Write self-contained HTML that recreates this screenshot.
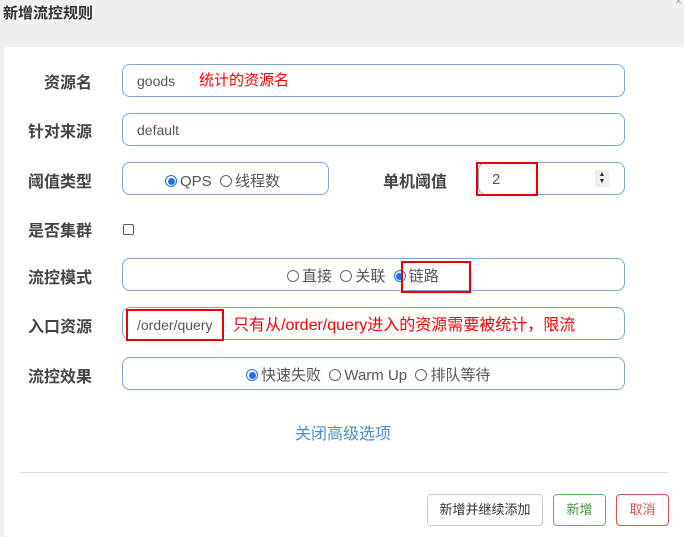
<!DOCTYPE html>
<html><head><meta charset="utf-8"><style>
*{box-sizing:border-box;margin:0;padding:0}
body{width:684px;height:527px;overflow:hidden;background:#f0f0f0;font-family:"Liberation Sans","Noto Sans CJK SC",sans-serif;position:relative;color:#333}
.a{position:absolute;line-height:1.2}
.title{left:3px;top:5px;font-size:15px;font-weight:bold;color:#333}
.panel{left:4px;top:47px;width:690px;height:490px;background:#fff;border-radius:4px}
.lbl{font-size:16px;font-weight:bold;color:#444;width:92px;text-align:right;left:0}
.box{border:1px solid #7fa6d0;border-radius:8px;height:33px;background:#fff}
.t{font-size:14px;color:#555}
.r{font-size:15px;color:#555}
.red{color:#f00;font-size:16px}
.rad{display:inline-block;width:12px;height:12px;border:1px solid #666;border-radius:50%;vertical-align:-1px;margin-right:3px;background:#fff;position:relative}
.rad.on{border-color:#1a73e8}
.rad.on::after{content:"";position:absolute;left:1.5px;top:1.5px;width:7px;height:7px;border-radius:50%;background:#1a73e8}
.hl{border:2px solid #e00}
.btn{height:32px;border:1px solid #ccc;border-radius:4px;font-size:13px;text-align:center;line-height:30px;background:#fff}
</style></head><body>
<div class="a title">新增流控规则</div>
<div class="a" style="right:2px;top:-6px;color:#aaa;font-size:12px">×</div>
<div class="a panel"></div>

<div class="a lbl" style="top:74px">资源名</div>
<div class="a box" style="left:122px;top:64px;width:503px"></div>
<div class="a t" style="left:137px;top:73px">goods</div>
<div class="a red" style="left:199px;top:72px;font-size:15px">统计的资源名</div>

<div class="a lbl" style="top:123px">针对来源</div>
<div class="a box" style="left:122px;top:113px;width:503px"></div>
<div class="a t" style="left:137px;top:122px">default</div>

<div class="a lbl" style="top:173px">阈值类型</div>
<div class="a box" style="left:122px;top:162px;width:207px"></div>
<div class="a r" style="left:165px;top:173px"><span class="rad on"></span>QPS&nbsp; <span class="rad"></span>线程数</div>
<div class="a lbl" style="top:173px;left:355px;width:92px">单机阈值</div>
<div class="a box" style="left:478px;top:162px;width:147px"></div>
<div class="a hl" style="left:476px;top:162px;width:62px;height:34px"></div>
<div class="a t" style="left:492px;top:171px;font-size:15px">2</div>
<div class="a" style="left:595px;top:170px;width:14px;height:17px;background:#eee;font-size:7px;line-height:7px;text-align:center;color:#333;padding-top:1px">▲<br>▼</div>

<div class="a lbl" style="top:222px">是否集群</div>
<div class="a" style="left:123px;top:224px;width:11px;height:11px;border:1px solid #555;border-radius:2px"></div>

<div class="a lbl" style="top:269px">流控模式</div>
<div class="a box" style="left:122px;top:258px;width:503px"></div>
<div class="a r" style="left:287px;top:268px"><span class="rad"></span>直接&nbsp; <span class="rad"></span>关联&nbsp; <span class="rad on"></span>链路</div>
<div class="a hl" style="left:401px;top:261px;width:70px;height:32px"></div>

<div class="a lbl" style="top:318px">入口资源</div>
<div class="a box" style="left:122px;top:307px;width:503px"></div>
<div class="a hl" style="left:126px;top:309px;width:98px;height:32px"></div>
<div class="a t" style="left:137px;top:317px">/order/query</div>
<div class="a red" style="left:233px;top:316px">只有从/order/query进入的资源需要被统计，限流</div>

<div class="a lbl" style="top:368px">流控效果</div>
<div class="a box" style="left:122px;top:357px;width:503px"></div>
<div class="a r" style="left:246px;top:367px"><span class="rad on"></span>快速失败&nbsp; <span class="rad"></span>Warm Up&nbsp; <span class="rad"></span>排队等待</div>

<div class="a" style="left:295px;top:425px;font-size:16px;color:#4a90d0">关闭高级选项</div>
<div class="a" style="left:20px;top:472px;width:648px;height:1px;background:#ddd"></div>

<div class="a btn" style="left:427px;top:494px;width:116px;color:#333">新增并继续添加</div>
<div class="a btn" style="left:553px;top:494px;width:53px;border-color:#5cb85c;color:#3c9a3c">新增</div>
<div class="a btn" style="left:616px;top:494px;width:53px;border-color:#d9534f;color:#d9534f">取消</div>
</body></html>
